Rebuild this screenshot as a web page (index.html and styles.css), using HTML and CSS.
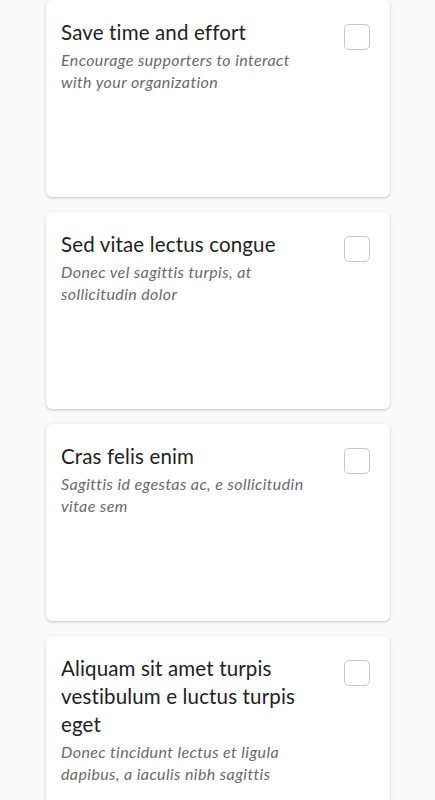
FILE: index.html
```html
<!DOCTYPE html>
<html>
<head>
<meta charset="utf-8">
<link rel="stylesheet" href="styles.css">
</head>
<body>
<main class="list">
  <section class="card">
    <div class="text">
      <h2 class="title">Save time and effort</h2>
      <p class="sub">Encourage supporters to interact with your organization</p>
    </div>
    <span class="check"></span>
  </section>
  <section class="card">
    <div class="text">
      <h2 class="title">Sed vitae lectus congue</h2>
      <p class="sub">Donec vel sagittis turpis, at sollicitudin dolor</p>
    </div>
    <span class="check"></span>
  </section>
  <section class="card">
    <div class="text">
      <h2 class="title">Cras felis enim</h2>
      <p class="sub">Sagittis id egestas ac, e sollicitudin vitae sem</p>
    </div>
    <span class="check"></span>
  </section>
  <section class="card">
    <div class="text">
      <h2 class="title">Aliquam sit amet turpis vestibulum e luctus turpis eget</h2>
      <p class="sub">Donec tincidunt lectus et ligula dapibus, a iaculis nibh sagittis</p>
    </div>
    <span class="check"></span>
  </section>
</main>
</body>
</html>
```
FILE: styles.css
```css
html, body {
  margin: 0;
  padding: 0;
  background: #fafafa;
}
body {
  font-family: "Lato", "Noto Sans", sans-serif;
  color: #222;
  font-variant-ligatures: none;
}
.list {
  display: flex;
  flex-direction: column;
  gap: 15px;
  padding: 0 45px 20px 46px;
}
.card {
  box-sizing: border-box;
  min-height: 197px;
  background: #fff;
  border-radius: 6px;
  box-shadow: 0 1px 3px rgba(0,0,0,0.22);
  display: flex;
  align-items: flex-start;
  padding: 18px 20px 18px 15px;
}
.text {
  width: 255px;
}
.title {
  margin: 0;
  font-size: 20.5px;
  font-weight: 400;
  line-height: 28px;
  letter-spacing: 0.15px;
  color: #222;
}
.sub {
  margin: 3px 0 0;
  font-size: 16px;
  font-style: italic;
  line-height: 22px;
  letter-spacing: 0.4px;
  color: #6a6a6a;
}
.check {
  margin-left: auto;
  margin-top: 6px;
  width: 26px;
  height: 26px;
  box-sizing: border-box;
  border: 1px solid #c8c8c8;
  border-radius: 5px;
  flex: none;
}
```
